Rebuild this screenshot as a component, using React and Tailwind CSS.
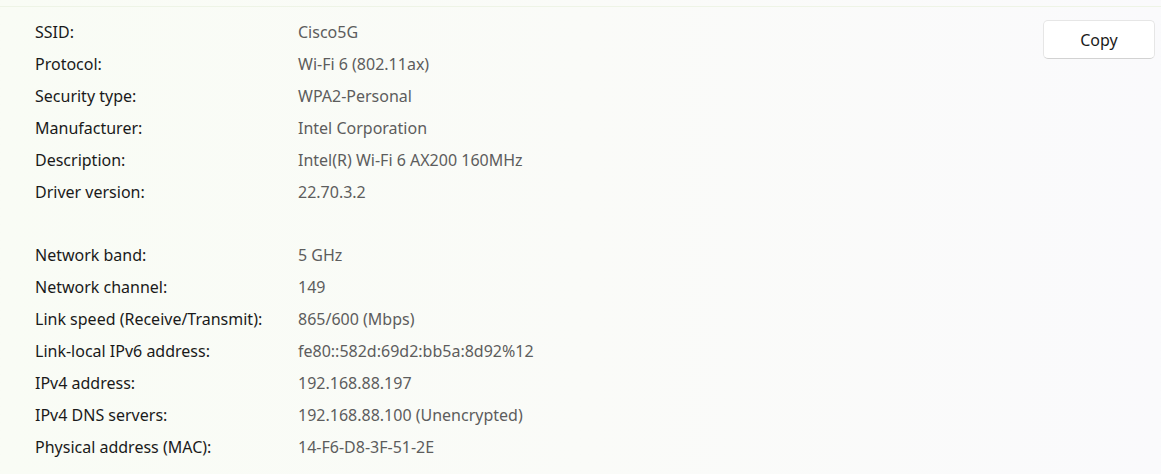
import React from "react";

const groups = [
  [
    ["SSID:", "Cisco5G"],
    ["Protocol:", "Wi-Fi 6 (802.11ax)"],
    ["Security type:", "WPA2-Personal"],
    ["Manufacturer:", "Intel Corporation"],
    ["Description:", "Intel(R) Wi-Fi 6 AX200 160MHz"],
    ["Driver version:", "22.70.3.2"],
  ],
  [
    ["Network band:", "5 GHz"],
    ["Network channel:", "149"],
    ["Link speed (Receive/Transmit):", "865/600 (Mbps)"],
    ["Link-local IPv6 address:", "fe80::582d:69d2:bb5a:8d92%12"],
    ["IPv4 address:", "192.168.88.197"],
    ["IPv4 DNS servers:", "192.168.88.100 (Unencrypted)"],
    ["Physical address (MAC):", "14-F6-D8-3F-51-2E"],
  ],
];

const App = () => {
  return (
    <div
      className="w-[1161px] h-[474px] overflow-hidden bg-gradient-to-r from-[#f9fcf5] via-[#fafbf8] to-[#fafafc] text-[16px]"
      style={{ fontFamily: "'Segoe UI', 'Noto Sans', sans-serif" }}
    >
      <div className="mt-[6px] h-px bg-[#eef4e6]" />

      <div className="flex pr-[6px]">
        {/* Properties list */}
        <div className="flex-1 pl-[35px] pt-[9px]">
          {groups.map((rows, gi) => (
            <div
              key={gi}
              className={"grid grid-cols-[263px_1fr] auto-rows-[32px] items-center" + (gi > 0 ? " mt-[31px]" : "")}
            >
              {rows.map(([label, value]) => (
                <React.Fragment key={label}>
                  <span className="text-[#1a1a1a] whitespace-nowrap">{label}</span>
                  <span className="text-[#5d5d5d] whitespace-nowrap">{value}</span>
                </React.Fragment>
              ))}
            </div>
          ))}
        </div>

        {/* Copy button */}
        <div className="pt-[13px]">
          <button className="w-[112px] h-[39px] rounded-[5px] bg-white border border-[#e6e6e6] border-b-[#d2d2d2] text-[#1a1a1a] text-[16px]">
            Copy
          </button>
        </div>
      </div>
    </div>
  );
};

export default App;
